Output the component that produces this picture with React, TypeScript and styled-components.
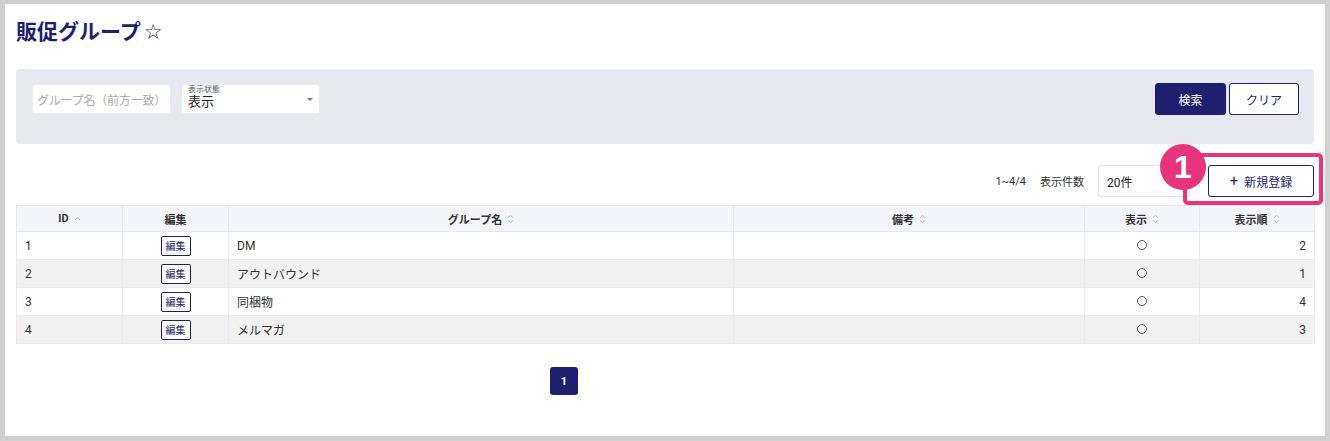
import styled, { createGlobalStyle } from 'styled-components'

const GlobalStyle = createGlobalStyle`
  html, body {
    margin: 0;
    padding: 0;
    background: #d0d0d0;
  }
  body {
    font-family: Roboto, "Noto Sans CJK JP", "Noto Sans", sans-serif;
    color: #333;
  }
`

const NAVY = '#1e1f6e'
const PINK = '#e8347d'

const Frame = styled.div`
  padding: 4px 5px 5px 5px;
  width: 1330px;
  height: 441px;
  box-sizing: border-box;
`

const Page = styled.div`
  background: #fff;
  height: 432px;
  padding: 14px 11px 0 11px;
  box-sizing: border-box;
  display: flex;
  flex-direction: column;
`

const Title = styled.h1`
  margin: 0;
  height: 28px;
  line-height: 28px;
  font-size: 21px;
  font-weight: 700;
  color: ${NAVY};
  display: flex;
  align-items: center;
  gap: 3px;
`

const Star = styled.span`
  font-size: 21px;
  font-weight: 400;
  color: #333;
  font-family: "DejaVu Sans", sans-serif;
`

const SearchPanel = styled.div`
  margin-top: 23px;
  height: 75px;
  box-sizing: border-box;
  background: #e8e8f0;
  border-radius: 4px;
  padding: 14px 15px 0 16px;
  display: flex;
  justify-content: space-between;
  align-items: flex-start;
`

const FieldGroup = styled.div`
  display: flex;
  gap: 10px;
  padding-top: 1px;
`

const TextInput = styled.div`
  width: 139px;
  height: 30px;
  box-sizing: border-box;
  background: #fff;
  border-radius: 3px;
  border: 1px solid #ececf3;
  padding: 0 4px;
  display: flex;
  align-items: center;
  font-size: 12px;
  letter-spacing: -0.2px;
  color: #aaa;
  white-space: nowrap;
`

const SelectBox = styled.div`
  position: relative;
  width: 139px;
  height: 30px;
  box-sizing: border-box;
  background: #fff;
  border-radius: 3px;
  border: 1px solid #ececf3;
  padding: 0 6px;
  display: flex;
  flex-direction: column;
  justify-content: center;
`

const SelectLabel = styled.span`
  font-size: 8px;
  line-height: 9px;
  color: #555;
  margin-top: -5px;
`

const SelectValue = styled.span`
  font-size: 13px;
  line-height: 15px;
  color: #222;
`

const Caret = styled.span`
  position: absolute;
  right: 6px;
  top: 13px;
  width: 0;
  height: 0;
  border-left: 3px solid transparent;
  border-right: 3px solid transparent;
  border-top: 3px solid #777;
`

const ButtonGroup = styled.div`
  display: flex;
  gap: 3px;
`

const Button = styled.button<{ $primary?: boolean; $width: number }>`
  width: ${({ $width }) => $width}px;
  height: 32px;
  border-radius: 3px;
  border: 1px solid ${NAVY};
  background: ${({ $primary }) => ($primary ? NAVY : '#fff')};
  color: ${({ $primary }) => ($primary ? '#fff' : NAVY)};
  font-family: inherit;
  font-size: 12px;
  cursor: pointer;
  display: flex;
  align-items: center;
  justify-content: center;
  gap: 6px;
  padding: 0;
`

const Toolbar = styled.div`
  position: relative;
  margin-top: 21px;
  height: 32px;
  display: flex;
  justify-content: flex-end;
  align-items: center;
  font-size: 11px;
  color: #333;
`

const Count = styled.span`
  margin-right: 14px;
`

const PageSizeSelect = styled.div`
  margin-left: 14px;
  width: 92px;
  height: 32px;
  box-sizing: border-box;
  border: 1px solid #e4e4ea;
  border-radius: 3px;
  display: flex;
  align-items: center;
  padding-left: 8px;
  font-size: 12px;
  color: #222;
  margin-right: 18px;
`

const Highlight = styled.div`
  position: absolute;
  right: -9px;
  top: -12px;
  width: 140px;
  height: 52px;
  box-sizing: border-box;
  border: 4px solid ${PINK};
  border-radius: 5px;
  pointer-events: none;
`

const Badge = styled.div`
  position: absolute;
  right: 108px;
  top: -21px;
  width: 46px;
  height: 46px;
  border-radius: 50%;
  background: ${PINK};
  color: #fff;
  font-size: 32px;
  font-weight: 700;
  display: flex;
  align-items: center;
  justify-content: center;
  font-family: "Liberation Sans", Arial, sans-serif;
`

const Table = styled.table`
  margin-top: 8px;
  width: 1298px;
  border-collapse: collapse;
  table-layout: fixed;
  font-size: 12px;
`

const Th = styled.th`
  height: 25px;
  padding: 0;
  background: #f4f5fb;
  border: 1px solid #e6e6ee;
  font-size: 11px;
  font-weight: 700;
  color: #333;
  text-align: center;
`

const HeadInner = styled.span`
  display: inline-flex;
  align-items: center;
  gap: 5px;
`

const Tr = styled.tr<{ $alt: boolean }>`
  background: ${({ $alt }) => ($alt ? '#f2f2f2' : '#fff')};
`

const Td = styled.td<{ $align?: 'left' | 'center' | 'right' }>`
  height: 27px;
  padding: 0 8px;
  border: 1px solid #ebebef;
  text-align: ${({ $align }) => $align ?? 'left'};
  color: #333;
`

const EditButton = styled.span`
  display: inline-flex;
  align-items: center;
  justify-content: center;
  width: 30px;
  height: 20px;
  box-sizing: border-box;
  border: 1px solid ${NAVY};
  border-radius: 2px;
  color: ${NAVY};
  font-size: 10px;
  background: #fff;
`

const Circle = styled.span`
  display: inline-block;
  width: 8px;
  height: 8px;
  border: 1px solid #555;
  border-radius: 50%;
`

const Pager = styled.div`
  margin-top: 23px;
  padding-left: 534px;
  display: flex;
`

const PageButton = styled.div`
  width: 28px;
  height: 28px;
  border-radius: 3px;
  background: ${NAVY};
  color: #fff;
  font-size: 11px;
  font-weight: 700;
  display: flex;
  align-items: center;
  justify-content: center;
`

const SortIcon = ({ up }: { up?: boolean }) =>
  up ? (
    <svg width="7" height="8" viewBox="0 0 7 8">
      <path d="M1 5 L3.5 2.5 L6 5" fill="none" stroke="#bbb" strokeWidth="1" />
    </svg>
  ) : (
    <svg width="7" height="10" viewBox="0 0 7 10">
      <path d="M1 3.8 L3.5 1.3 L6 3.8" fill="none" stroke="#bbb" strokeWidth="1" />
      <path d="M1 6.2 L3.5 8.7 L6 6.2" fill="none" stroke="#bbb" strokeWidth="1" />
    </svg>
  )

const columns = [
  { label: 'ID', width: 106, up: true },
  { label: '編集', width: 106, none: true },
  { label: 'グループ名', width: 505 },
  { label: '備考', width: 351 },
  { label: '表示', width: 115 },
  { label: '表示順', width: 115 },
]

const rows = [
  { id: 1, name: 'DM', order: 2 },
  { id: 2, name: 'アウトバウンド', order: 1 },
  { id: 3, name: '同梱物', order: 4 },
  { id: 4, name: 'メルマガ', order: 3 },
]

export default function App() {
  return (
    <>
      <GlobalStyle />
      <Frame>
        <Page>
          <Title>
            販促グループ<Star>☆</Star>
          </Title>

          <SearchPanel>
            <FieldGroup>
              <TextInput>グループ名（前方一致）</TextInput>
              <SelectBox>
                <SelectLabel>表示状態</SelectLabel>
                <SelectValue>表示</SelectValue>
                <Caret />
              </SelectBox>
            </FieldGroup>
            <ButtonGroup>
              <Button $primary $width={71}>検索</Button>
              <Button $width={70}>クリア</Button>
            </ButtonGroup>
          </SearchPanel>

          <Toolbar>
            <Count>1~4/4</Count>
            <span>表示件数</span>
            <PageSizeSelect>20件</PageSizeSelect>
            <Button $width={106}>
              <span style={{ fontSize: 15, lineHeight: 1 }}>+</span>新規登録
            </Button>
            <Highlight />
            <Badge>1</Badge>
          </Toolbar>

          <Table>
            <colgroup>
              {columns.map((c) => (
                <col key={c.label} style={{ width: c.width }} />
              ))}
            </colgroup>
            <thead>
              <tr>
                {columns.map((c) => (
                  <Th key={c.label}>
                    <HeadInner>
                      {c.label}
                      {!c.none && <SortIcon up={c.up} />}
                    </HeadInner>
                  </Th>
                ))}
              </tr>
            </thead>
            <tbody>
              {rows.map((r, i) => (
                <Tr key={r.id} $alt={i % 2 === 1}>
                  <Td>{r.id}</Td>
                  <Td $align="center">
                    <EditButton>編集</EditButton>
                  </Td>
                  <Td>{r.name}</Td>
                  <Td />
                  <Td $align="center">
                    <Circle />
                  </Td>
                  <Td $align="right">{r.order}</Td>
                </Tr>
              ))}
            </tbody>
          </Table>

          <Pager>
            <PageButton>1</PageButton>
          </Pager>
        </Page>
      </Frame>
    </>
  )
}
